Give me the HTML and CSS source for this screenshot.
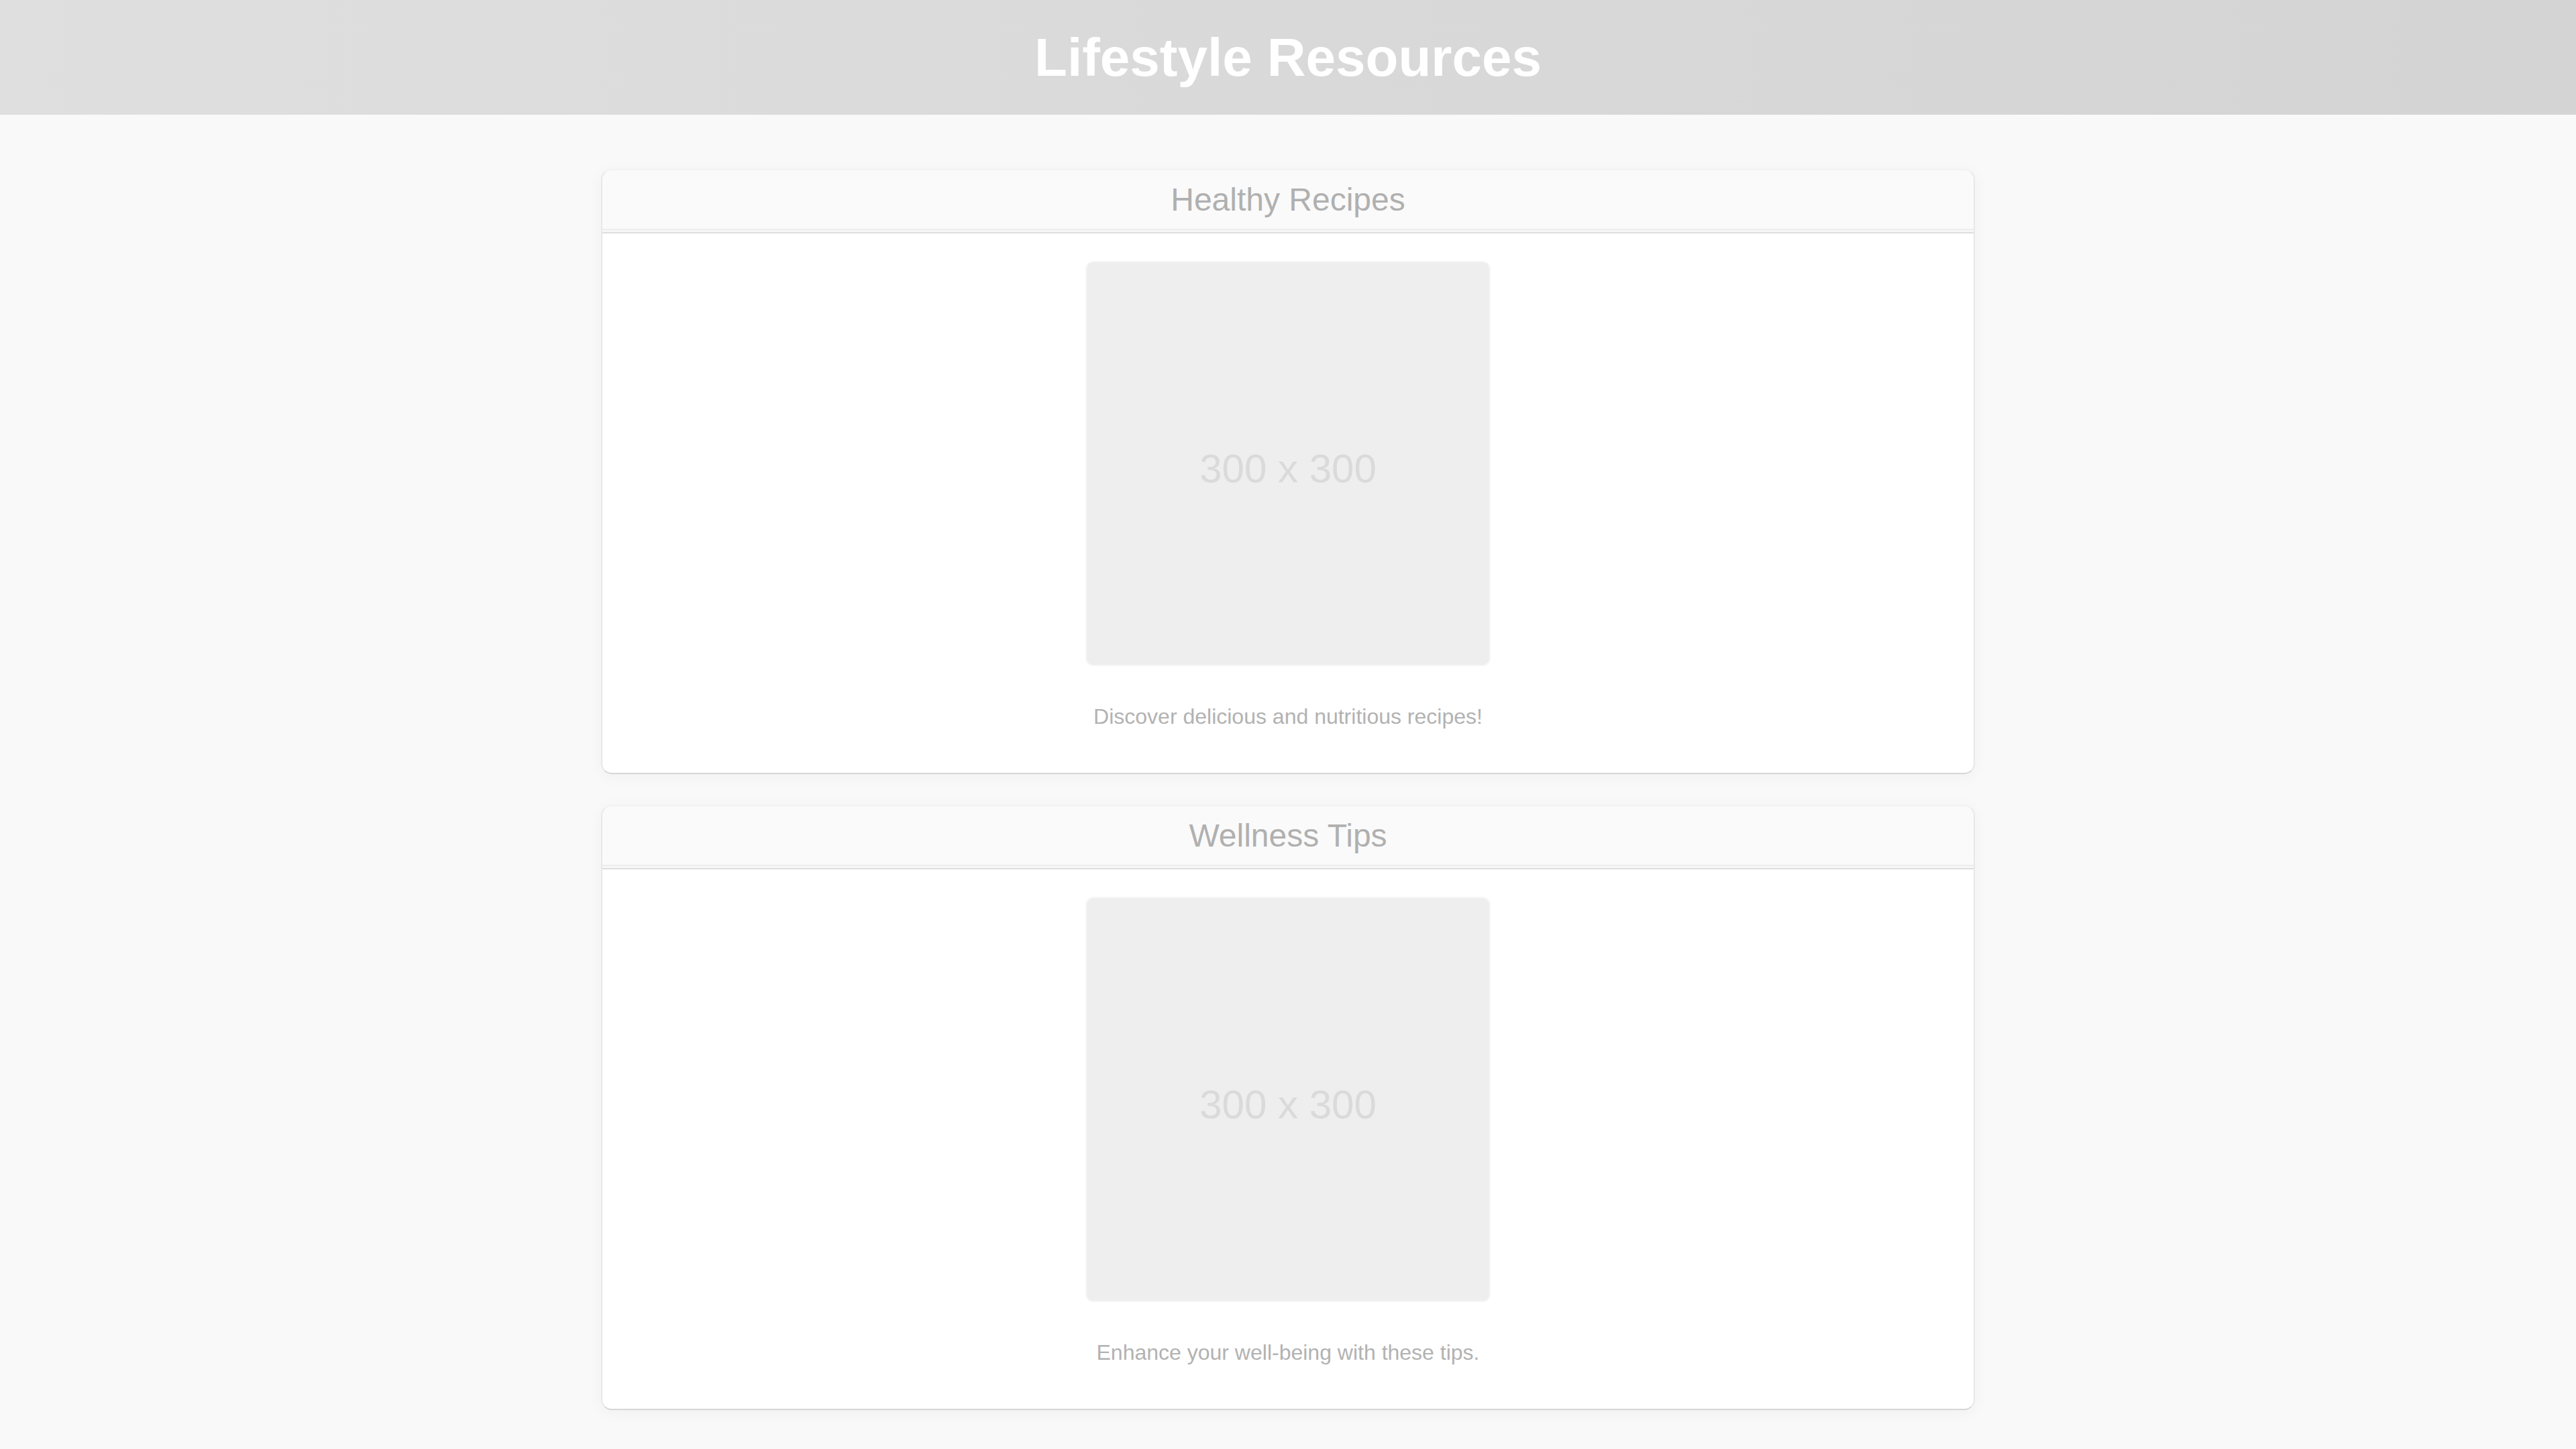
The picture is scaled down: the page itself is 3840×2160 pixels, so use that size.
FILE: index.html
```html
<!DOCTYPE html>
<html lang="en">
<head>
<meta charset="utf-8">
<title>Lifestyle Resources</title>
<link rel="stylesheet" href="styles.css">
</head>
<body>
<header class="site-header">
  <h1 class="site-title">Lifestyle Resources</h1>
</header>
<main class="content">
  <section class="card">
    <div class="card-header"><h2 class="card-title">Healthy Recipes</h2></div>
    <div class="card-body">
      <div class="placeholder"><span>300 x 300</span></div>
      <p class="card-text">Discover delicious and nutritious recipes!</p>
    </div>
  </section>
  <section class="card">
    <div class="card-header"><h2 class="card-title">Wellness Tips</h2></div>
    <div class="card-body">
      <div class="placeholder"><span>300 x 300</span></div>
      <p class="card-text">Enhance your well-being with these tips.</p>
    </div>
  </section>
</main>
</body>
</html>
```
FILE: styles.css
```css
html, body {
  margin: 0;
  padding: 0;
}
body {
  font-family: "Liberation Sans", Arial, sans-serif;
  background: #f9f9f9;
  padding-bottom: 80px;
}
.site-header {
  height: 171px;
  display: flex;
  align-items: center;
  justify-content: center;
  background: linear-gradient(90deg, #dfdfdf 0%, #d9d9d9 50%, #d4d4d4 100%);
}
.site-title {
  margin: 0;
  font-size: 80px;
  line-height: 1;
  font-weight: bold;
  color: #ffffff;
}
.content {
  width: 2048px;
  margin: 81px auto 0;
  display: flex;
  flex-direction: column;
  gap: 46px;
}
.card {
  box-sizing: border-box;
  width: 2048px;
  background: #f6f6f6;
  border: 2px solid #e8e8e8;
  border-top-color: #f2f2f2;
  border-bottom-color: #d6d6d6;
  border-radius: 16px;
  box-shadow: 0 4px 24px rgba(0, 0, 0, 0.04);
  overflow: hidden;
}
.card-header {
  height: 87px;
  display: flex;
  align-items: center;
  justify-content: center;
  background: #fafafa;
  border-bottom: 2px solid #ececec;
  margin-bottom: 3px;
}
.card-title {
  margin: 0;
  font-size: 48px;
  line-height: 1;
  font-weight: normal;
  color: #b0b0b0;
}
.card-body {
  background: #ffffff;
  border-top: 2px solid #dedede;
  padding: 43px 0 66px;
  display: flex;
  flex-direction: column;
  align-items: center;
}
.placeholder {
  box-sizing: border-box;
  width: 600px;
  height: 600px;
  padding-top: 14px;
  background: #eeeeee;
  border-radius: 10px;
  box-shadow: 0 0 0 2px #f6f6f6;
  display: flex;
  align-items: center;
  justify-content: center;
  font-size: 60px;
  color: #dadada;
}
.card-text {
  margin: 59px 0 0;
  font-size: 32px;
  line-height: 36px;
  color: #b2b2b2;
}
```
